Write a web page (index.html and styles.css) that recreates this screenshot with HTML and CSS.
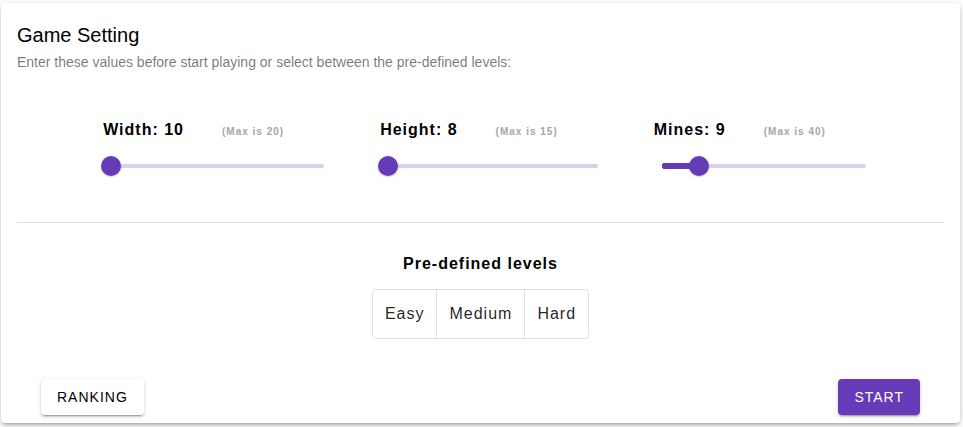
FILE: index.html
```html
<!DOCTYPE html>
<html lang="en">
<head>
<meta charset="utf-8">
<title>Game Setting</title>
<link rel="stylesheet" href="styles.css">
</head>
<body>
<main class="card">
  <header>
    <h1 class="title">Game Setting</h1>
    <p class="subtitle">Enter these values before start playing or select between the pre-defined levels:</p>
  </header>
  <section class="sliders">
    <div class="setting">
      <div class="caption"><label for="width">Width: 10</label><small class="hint">(Max is 20)</small></div>
      <input class="slider" id="width" type="range" min="10" max="20" value="10">
    </div>
    <div class="setting">
      <div class="caption"><label for="height">Height: 8</label><small class="hint">(Max is 15)</small></div>
      <input class="slider" id="height" type="range" min="8" max="15" value="8">
    </div>
    <div class="setting">
      <div class="caption"><label for="mines">Mines: 9</label><small class="hint">(Max is 40)</small></div>
      <input class="slider slider-mines" id="mines" type="range" min="2" max="40" value="9">
    </div>
  </section>
  <hr class="divider">
  <section class="levels">
    <h2 class="levels-title">Pre-defined levels</h2>
    <div class="toggle-group">
      <button class="toggle" type="button">Easy</button>
      <button class="toggle" type="button">Medium</button>
      <button class="toggle" type="button">Hard</button>
    </div>
  </section>
  <footer class="actions">
    <button class="button" type="button">RANKING</button>
    <button class="button button-primary" type="button">START</button>
  </footer>
</main>
</body>
</html>
```
FILE: styles.css
```css
* {
  box-sizing: border-box;
}

body {
  margin: 0;
  padding: 3px 3px 4px 1px;
  font-family: "Liberation Sans", Arial, sans-serif;
  color: rgba(0, 0, 0, 0.87);
  background: #fff;
}

.card {
  padding: 16px 16px 8px;
  border-radius: 4px;
  background: #fff;
  box-shadow: 0 3px 3px -2px rgba(0, 0, 0, 0.2), 0 3px 4px rgba(0, 0, 0, 0.14), 0 1px 8px rgba(0, 0, 0, 0.12);
}

.title {
  margin: 0;
  font-size: 20px;
  line-height: 32px;
  font-weight: 400;
  color: #000;
}

.subtitle {
  margin: 0;
  font-size: 14px;
  line-height: 22px;
  color: rgba(0, 0, 0, 0.54);
}

.sliders {
  display: flex;
  justify-content: center;
  gap: 54px;
  padding: 45px 0 0 6px;
}

.caption {
  display: flex;
  align-items: baseline;
  gap: 38px;
  padding: 0 40px 0 2px;
  font-size: 16px;
  line-height: 24px;
  font-weight: 700;
  letter-spacing: 1px;
  color: #000;
}

.hint {
  font-size: 10px;
  color: #a6a6a6;
}

/* The line starts and ends at the thumb's centre, 10px inside the control. */
.slider {
  --fill: 0px;
  display: block;
  appearance: none;
  width: calc(100% + 10px);
  height: 20px;
  margin: 12px -10px 0 0;
  background: none;
}

.slider::-webkit-slider-runnable-track {
  height: 6px;
  background:
    radial-gradient(circle, #d9ceed 2px, transparent 2px) right 10px center / 4px 4px no-repeat,
    linear-gradient(#d9ceed, #d9ceed) right 12px center / calc(100% - 24px - var(--fill)) 4px no-repeat;
}

.slider-mines {
  --fill: 34px;
}

.slider-mines::-webkit-slider-runnable-track {
  background:
    radial-gradient(circle, #d9ceed 2px, transparent 2px) right 10px center / 4px 4px no-repeat,
    radial-gradient(circle, #673ab7 3px, transparent 3px) left 10px center / 6px 6px no-repeat,
    linear-gradient(#673ab7, #673ab7) left 12px center / var(--fill) 6px no-repeat,
    linear-gradient(#d9ceed, #d9ceed) right 12px center / calc(100% - 24px - var(--fill)) 4px no-repeat;
}

.slider::-webkit-slider-thumb {
  appearance: none;
  width: 20px;
  height: 20px;
  margin-top: -7px;
  border-radius: 50%;
  background: #673ab7;
  box-shadow: 0 1px 2px rgba(0, 0, 0, 0.2);
}

.divider {
  margin: 46px 0 0;
  border: 0;
  border-top: 1px solid rgba(0, 0, 0, 0.12);
}

.levels {
  display: flex;
  flex-direction: column;
  align-items: center;
  gap: 13px;
  padding-top: 29px;
}

.levels-title {
  margin: 0;
  font-size: 16px;
  line-height: 24px;
  letter-spacing: 1px;
  color: #000;
}

.toggle-group {
  display: flex;
  border: 1px solid rgba(0, 0, 0, 0.12);
  border-radius: 4px;
}

.toggle {
  padding: 0 12px;
  border: 0;
  background: none;
  font: inherit;
  font-size: 16px;
  line-height: 48px;
  letter-spacing: 1px;
  color: rgba(0, 0, 0, 0.87);
}

.toggle + .toggle {
  border-left: 1px solid rgba(0, 0, 0, 0.12);
}

.actions {
  display: flex;
  justify-content: space-between;
  padding: 40px 24px 0;
}

.button {
  padding: 0 16px;
  border: 0;
  border-radius: 4px;
  background: #fff;
  font: inherit;
  font-size: 14px;
  line-height: 36px;
  letter-spacing: 1px;
  color: #000;
  box-shadow: 0 3px 1px -2px rgba(0, 0, 0, 0.2), 0 2px 2px rgba(0, 0, 0, 0.14), 0 1px 5px rgba(0, 0, 0, 0.12);
}

.button-primary {
  background: #673ab7;
  color: #fff;
}
```
